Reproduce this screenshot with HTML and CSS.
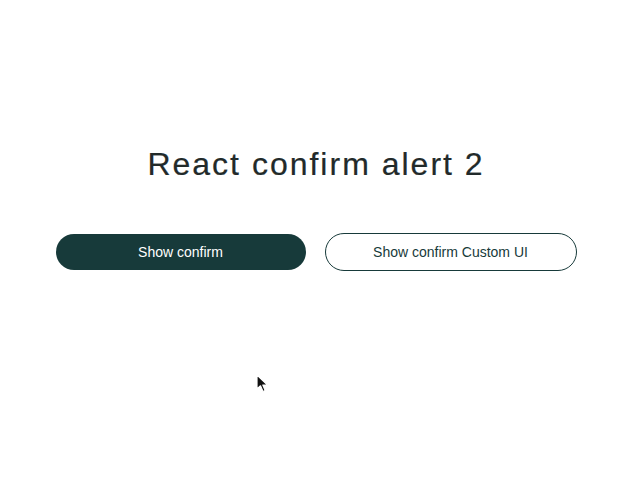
FILE: index.html
```html
<!DOCTYPE html>
<html>
<head>
<meta charset="utf-8">
<link rel="stylesheet" href="styles.css">
</head>
<body>
<main class="app">
  <h1 class="title">React confirm alert 2</h1>
  <div class="actions">
    <button class="btn btn-solid">Show confirm</button>
    <button class="btn btn-outline">Show confirm Custom UI</button>
  </div>
</main>
<svg class="cursor" width="14" height="20" viewBox="0 0 14 20">
  <path d="M1 1 L1 15 L4.5 11.8 L7 17.5 L9.2 16.5 L6.8 11 L11.5 11 Z" fill="#111" stroke="#fff" stroke-width="1.2" stroke-linejoin="round"/>
</svg>
</body>
</html>
```
FILE: styles.css
```css
html, body {
  margin: 0;
  padding: 0;
  background: #fff;
}
body {
  font-family: "Liberation Sans", Arial, sans-serif;
  width: 630px;
  height: 490px;
  position: relative;
  overflow: hidden;
}
.app {
  display: flex;
  flex-direction: column;
  align-items: center;
  padding-top: 144px;
}
.title {
  margin: 0;
  font-size: 32px;
  line-height: 40px;
  font-weight: normal;
  letter-spacing: 2px;
  color: #222a2a;
  padding-left: 2px;
  -webkit-text-stroke: 0.2px #222a2a;
}
.actions {
  display: flex;
  align-items: center;
  gap: 19px;
  margin-top: 49px;
  padding-left: 2px;
}
.btn {
  box-sizing: content-box;
  width: 250px;
  height: 36px;
  padding: 0;
  border-radius: 19px;
  font-family: "Liberation Sans", Arial, sans-serif;
  font-size: 14px;
  cursor: pointer;
}
.btn-solid {
  background: #173a3a;
  color: #fff;
  border: none;
  border-radius: 18px;
}
.btn-outline {
  background: #fff;
  color: #173a3a;
  border: 1px solid #173a3a;
}
.cursor {
  position: absolute;
  left: 256px;
  top: 374px;
}
```
